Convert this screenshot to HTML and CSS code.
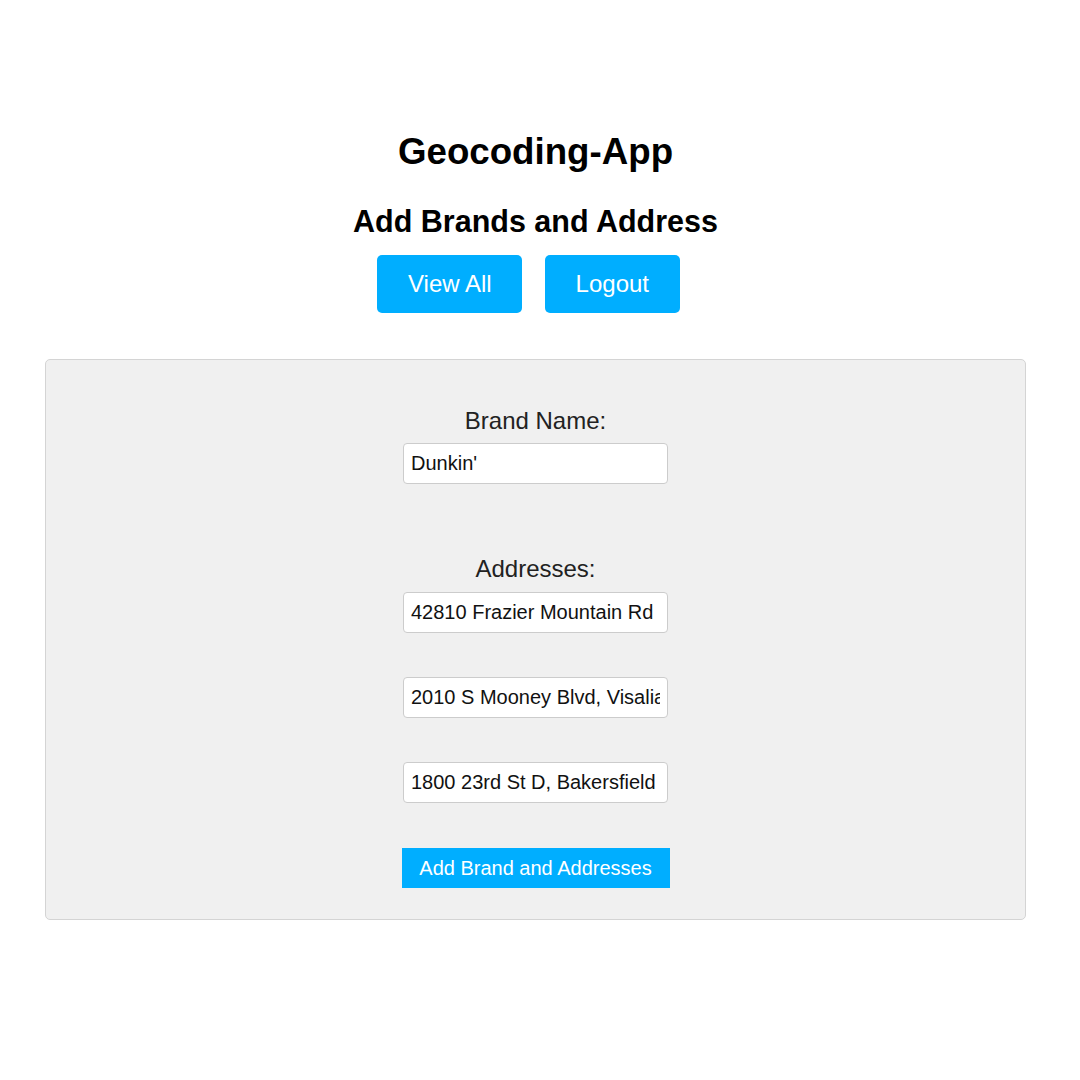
FILE: index.html
```html
<!DOCTYPE html>
<html lang="en">
<head>
<meta charset="utf-8">
<title>Geocoding-App</title>
<link rel="stylesheet" href="styles.css">
</head>
<body>
<div class="page">
  <header class="header">
    <h1 class="title">Geocoding-App</h1>
    <h2 class="subtitle">Add Brands and Address</h2>
    <nav class="nav">
      <button class="nav-btn" type="button">View All</button>
      <button class="nav-btn" type="button">Logout</button>
    </nav>
  </header>
  <form class="panel">
    <label class="field-label label-brand" for="brand">Brand Name:</label>
    <input class="field" id="brand" type="text" value="Dunkin'">
    <label class="field-label label-addr" for="addr1">Addresses:</label>
    <input class="field" id="addr1" type="text" value="42810 Frazier Mountain Rd">
    <input class="field field-gap" type="text" value="2010 S Mooney Blvd, Visalia">
    <input class="field field-gap" type="text" value="1800 23rd St D, Bakersfield">
    <button class="submit" type="button">Add Brand and Addresses</button>
  </form>
</div>
</body>
</html>
```
FILE: styles.css
```css
html, body {
  margin: 0;
  padding: 0;
  background: #ffffff;
}

body {
  font-family: "Liberation Sans", Arial, sans-serif;
  color: #000000;
}

.page {
  width: 1071px;
}

.header {
  display: flex;
  flex-direction: column;
  align-items: center;
  padding-top: 131px;
}

.title {
  margin: 0;
  font-size: 36.7px;
  line-height: 42px;
  font-weight: bold;
}

.subtitle {
  margin: 32px 0 0;
  font-size: 30.5px;
  line-height: 32px;
  font-weight: bold;
}

.nav {
  display: flex;
  justify-content: center;
  gap: 23px;
  margin-top: 18px;
  padding-right: 14px;
  align-self: stretch;
}

.nav-btn {
  height: 58px;
  padding: 0 30.5px;
  border: none;
  border-radius: 5px;
  background: #00aeff;
  color: #ffffff;
  font-family: "Liberation Sans", Arial, sans-serif;
  font-size: 24px;
  line-height: 28px;
}

.panel {
  margin: 46px 45px 0;
  padding: 47px 0 31px;
  border: 1px solid #d4d4d4;
  border-radius: 5px;
  background: #f0f0f0;
  display: flex;
  flex-direction: column;
  align-items: center;
}

.field-label {
  font-size: 24px;
  line-height: 28px;
  color: #222222;
}

.label-brand {
  margin-bottom: 8px;
}

.label-addr {
  margin-top: 71px;
  margin-bottom: 9px;
}

.field {
  box-sizing: border-box;
  width: 265px;
  height: 41px;
  margin: 0;
  padding: 0 7px;
  border: 1px solid #cccccc;
  border-radius: 4px;
  background: #ffffff;
  color: #111111;
  font-family: "Liberation Sans", Arial, sans-serif;
  font-size: 20px;
}

.field-gap {
  margin-top: 44px;
}

.submit {
  margin-top: 45px;
  width: 268px;
  height: 40px;
  padding: 0;
  border: none;
  border-radius: 0;
  background: #00aeff;
  color: #ffffff;
  font-family: "Liberation Sans", Arial, sans-serif;
  font-size: 20px;
}
```
